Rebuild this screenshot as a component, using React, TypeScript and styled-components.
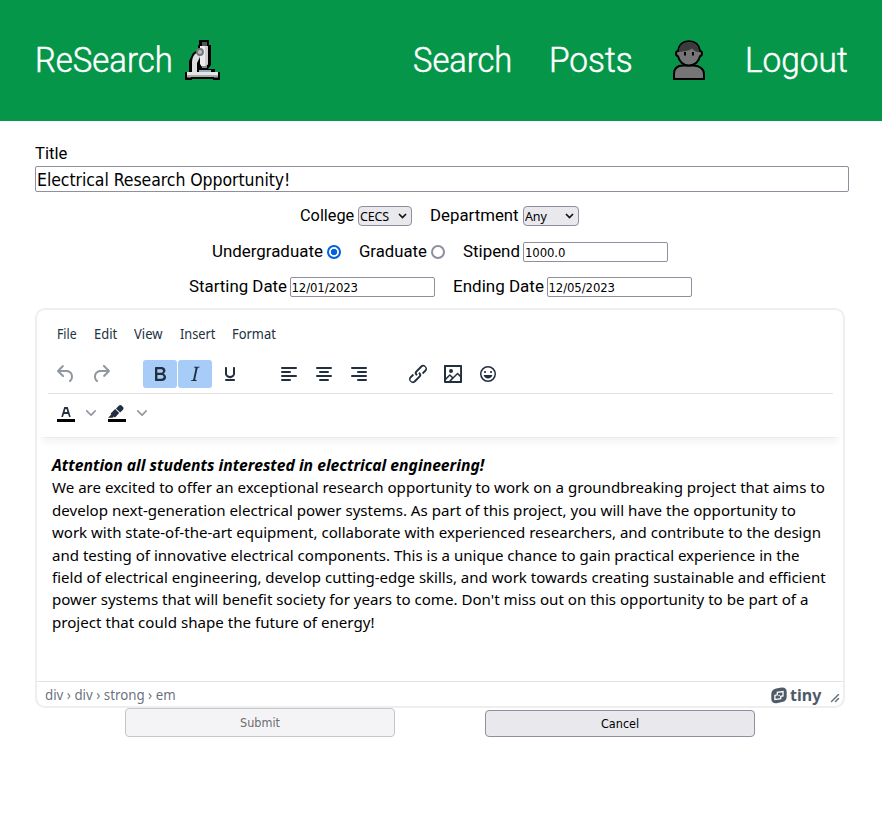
import React, { useLayoutEffect, useRef, useState } from "react";
import styled, { createGlobalStyle } from "styled-components";

const GlobalStyle = createGlobalStyle`
  *, *::before, *::after { box-sizing: border-box; }
  body { margin: 0; background: #fff; color: #000; }
`;

const display = `Roboto, "Noto Sans", sans-serif`;
const ui = `"Noto Sans", "Open Sans", sans-serif`;
const control = `"DejaVu Sans Condensed", "DejaVu Sans", sans-serif`;

const FitBox = styled.span<{ $w: number }>`
  display: inline-block;
  flex: none;
  width: ${(p) => p.$w}px;
  white-space: nowrap;
`;
const FitInner = styled.span`
  display: inline-block;
  transform-origin: 0 50%;
`;
function Fit({ w, children }: { w: number; children: React.ReactNode }) {
  const ref = useRef<HTMLSpanElement>(null);
  const [scale, setScale] = useState(1);
  useLayoutEffect(() => {
    if (ref.current) setScale(w / ref.current.offsetWidth);
  }, [w]);
  return (
    <FitBox $w={w}>
      <FitInner ref={ref} style={{ transform: `scaleX(${scale})` }}>{children}</FitInner>
    </FitBox>
  );
}

const Header = styled.header`
  height: 121px;
  padding: 0 34.5px 0 34.5px;
  background: #05964a;
  color: #fff;
  display: flex;
  align-items: center;
  justify-content: space-between;
  font: 300 35px/54px ${display};
  -webkit-text-stroke: 0.5px #fff;
`;
const Brand = styled.div`
  display: flex;
  align-items: center;
  gap: 11px;
  svg { margin-bottom: 2px; }
`;
const Nav = styled.nav`
  display: flex;
  align-items: center;
  gap: 37px;
  svg { margin: 0 2px 2px; }
`;

const Form = styled.form`
  padding: 19px 33px 0 35px;
  font: 400 17.2px/26px ${display};
`;
const Label = styled.label`
  display: flex;
  align-items: center;
`;
const TextInput = styled.input`
  display: block;
  width: 145px;
  height: 20px;
  margin: 1px 0 0 3px;
  padding: 2px 1px 0;
  border: 1px solid #8f8f9d;
  border-radius: 2px;
  background: #fff;
  color: #000;
  font: 13px/16px ${control};
  letter-spacing: -0.1px;
`;
const TitleInput = styled(TextInput)`
  width: 814px;
  height: 26px;
  margin: 0;
  font: 17.5px/22px ${control};
  letter-spacing: -0.06px;
`;
const Row = styled.div<{ $top: number }>`
  display: flex;
  justify-content: center;
  gap: 18px;
  height: 26px;
  margin: ${(p) => p.$top}px 4px 0 0;
`;
const SelectRow = styled(Row)`
  margin-right: 5px;
`;
const SelectWrap = styled.span<{ $w: number }>`
  display: flex;
  align-items: center;
  width: ${(p) => p.$w}px;
  height: 20px;
  margin: 2px 0 0 4px;
  padding-right: 4px;
  border: 1px solid #8f8f9d;
  border-radius: 4px;
  background: #e9e9ed;
`;
const Select = styled.select`
  appearance: none;
  flex: 1;
  min-width: 0;
  padding: 1px 0 0 1px;
  border: 0;
  background: none;
  color: #000;
  font: 12.5px/16px ${ui};
  letter-spacing: -0.15px;
`;
const Radio = styled.input`
  appearance: none;
  width: 14px;
  height: 14px;
  margin: 2px 0 0 4px;
  border: 2px solid #8f8f9d;
  border-radius: 50%;
  &:checked {
    border-color: #0060df;
    background: radial-gradient(circle, #0060df 2.8px, #fff 3.6px);
  }
`;

const Editor = styled.section`
  width: 810px;
  height: 400px;
  margin-top: 9px;
  border: 2px solid #eee;
  border-radius: 10px;
  overflow: hidden;
  display: flex;
  flex-direction: column;
  color: #222f3e;
  font-family: ${ui};
`;
const EditorHead = styled.div`
  flex: none;
  height: 127px;
  margin: 0 2px;
  padding: 0 9px;
  box-shadow: 0 2px 2px -2px rgba(34, 47, 62, 0.1), 0 8px 8px -4px rgba(34, 47, 62, 0.07);
`;
const MenuBar = styled.div`
  display: flex;
  align-items: center;
  gap: 17px;
  height: 45px;
  padding: 2px 0 0 9px;
  font-size: 13.5px;
  line-height: 20px;
`;
const ToolRow = styled.div<{ $line?: boolean }>`
  display: flex;
  align-items: center;
  gap: 25px;
  height: 39px;
  margin-right: -1px;
  padding-left: 1px;
  ${(p) => (p.$line ? "border-bottom: 1px solid #e3e3e3;" : "padding-bottom: 2px;")}
`;
const Group = styled.div`
  display: flex;
  gap: 1px;
`;
const Tool = styled.button<{ $on?: boolean; $dim?: boolean }>`
  display: flex;
  align-items: center;
  justify-content: center;
  width: 34px;
  height: 28px;
  padding: 0;
  border: 0;
  border-radius: 3px;
  background: ${(p) => (p.$on ? "#a6ccf7" : "none")};
  color: ${(p) => (p.$dim ? "rgba(34,47,62,.5)" : "#222f3e")};
`;
const SplitTool = styled.button`
  display: flex;
  align-items: center;
  gap: 8px;
  width: 50px;
  height: 28px;
  padding: 0 0 0 5px;
  border: 0;
  background: none;
  color: #222f3e;
  svg { flex: none; }
`;
const Content = styled.div`
  flex: 1;
  padding: 17px 15px 0 15px;
  color: #000;
  font-size: 15.3px;
  line-height: 22.4px;
`;
const Line = styled.div`
  height: 22.4px;
`;
const Lead = styled(Line)`
  font-weight: 700;
  font-style: italic;
`;
const StatusBar = styled.div`
  display: flex;
  align-items: center;
  height: 25px;
  padding: 2px 3px 0 8px;
  border-top: 1px solid #e3e3e3;
  color: rgba(34, 47, 62, 0.7);
  font-size: 13.5px;
  line-height: 20px;
`;
const Tiny = styled.span`
  display: flex;
  align-items: center;
  gap: 3px;
  margin-left: auto;
  color: #4e5a68;
  font: 700 16px/20px "Noto Sans", sans-serif;
`;
const Grip = styled.svg`
  margin: 6px 0 0 9px;
`;
const Actions = styled.div`
  display: flex;
  gap: 90px;
  padding-left: 90px;
`;
const Button = styled.button<{ $top?: number; $h: number }>`
  width: 270px;
  height: ${(p) => p.$h}px;
  margin-top: ${(p) => p.$top || 0}px;
  padding: 0;
  border: 1px solid #8f8f9d;
  border-radius: 4px;
  background: #e9e9ed;
  color: #000;
  font: 12.5px/18px ${control};
  &:disabled {
    border-color: #c5c5cc;
    background: #f4f4f6;
    color: #6d6d6d;
  }
`;

const icons = {
  undo: "M6.4 8H12c3.7 0 6.2 2 6.8 5.1.6 2.7-.4 5.6-2.3 6.8a1 1 0 0 1-1-1.8c1.1-.6 1.8-2.7 1.4-4.6-.5-2.1-2.1-3.5-4.9-3.5H6.4l3.3 3.3a1 1 0 1 1-1.4 1.4l-5-5a1 1 0 0 1 0-1.4l5-5a1 1 0 0 1 1.4 1.4L6.4 8Z",
  redo: "M17.6 10H12c-2.8 0-4.4 1.4-4.9 3.5-.4 2 .3 4 1.4 4.6a1 1 0 1 1-1 1.8c-2-1.2-2.9-4.1-2.3-6.8.6-3 3-5.1 6.8-5.1h5.6l-3.3-3.3a1 1 0 1 1 1.4-1.4l5 5a1 1 0 0 1 0 1.4l-5 5a1 1 0 0 1-1.4-1.4l3.3-3.3Z",
  bold: "M7.8 19c-.3 0-.5 0-.6-.2l-.2-.5V5.7c0-.2 0-.4.2-.5l.6-.2h5c1.5 0 2.7.3 3.5 1 .7.6 1.1 1.4 1.1 2.5a3 3 0 0 1-.6 1.9c-.4.6-1 1-1.6 1.2.4.1.9.3 1.3.6s.8.7 1 1.2c.4.4.5 1 .5 1.6 0 1.3-.4 2.3-1.3 3-.8.7-2.1 1-3.8 1H7.8Zm5-8.3c.6 0 1.2-.1 1.6-.5.4-.3.6-.7.6-1.3 0-1.1-.8-1.7-2.3-1.7H9.3v3.5h3.4Zm.5 6c.7 0 1.3-.1 1.7-.4.4-.4.6-.9.6-1.5s-.2-1-.7-1.4c-.4-.3-1-.4-2-.4H9.4v3.8h4Z",
  italic: "m16.7 4.7-.1.9h-.3c-.6 0-1 0-1.4.3-.3.3-.4.6-.5 1.1l-2.1 9.8v.6c0 .5.4.8 1.4.8h.2l-.2.8H8l.2-.8h.2c1.1 0 1.8-.5 2-1.5l2-9.8.1-.5c0-.6-.4-.8-1.4-.8h-.3l.2-.9h5.8Z",
  underline: "M16 5c.6 0 1 .4 1 1v5.5a4 4 0 0 1-.4 1.8l-1 1.4a5.3 5.3 0 0 1-5.5 1 5 5 0 0 1-1.6-1c-.5-.4-.8-.9-1.1-1.4a4 4 0 0 1-.4-1.8V6c0-.6.4-1 1-1s1 .4 1 1v5.5c0 .3 0 .6.2 1l.6.7a3.3 3.3 0 0 0 2.2.8 3.4 3.4 0 0 0 2.2-.8c.3-.2.4-.5.6-.8l.2-.9V6c0-.6.4-1 1-1ZM8 17h8c.6 0 1 .4 1 1s-.4 1-1 1H8a1 1 0 0 1 0-2Z",
  left: "M5 5h14a1 1 0 0 1 0 2H5a1 1 0 1 1 0-2Zm0 4h8a1 1 0 0 1 0 2H5a1 1 0 1 1 0-2Zm0 8h8a1 1 0 0 1 0 2H5a1 1 0 0 1 0-2Zm0-4h14a1 1 0 0 1 0 2H5a1 1 0 0 1 0-2Z",
  center: "M5 5h14a1 1 0 0 1 0 2H5a1 1 0 1 1 0-2Zm3 4h8a1 1 0 0 1 0 2H8a1 1 0 1 1 0-2Zm0 8h8a1 1 0 0 1 0 2H8a1 1 0 0 1 0-2Zm-3-4h14a1 1 0 0 1 0 2H5a1 1 0 0 1 0-2Z",
  right: "M5 5h14a1 1 0 0 1 0 2H5a1 1 0 1 1 0-2Zm6 4h8a1 1 0 0 1 0 2h-8a1 1 0 0 1 0-2Zm0 8h8a1 1 0 0 1 0 2h-8a1 1 0 0 1 0-2Zm-6-4h14a1 1 0 0 1 0 2H5a1 1 0 0 1 0-2Z",
  link: "M6.2 12.3a1 1 0 0 1 1.4 1.4l-2 2a2 2 0 1 0 2.6 2.8l4.8-4.8a1 1 0 0 0 0-1.4 1 1 0 1 1 1.4-1.3 2.9 2.9 0 0 1 0 4L9.6 20a3.9 3.9 0 0 1-5.5-5.5l2-2Zm11.6-.6a1 1 0 0 1-1.4-1.4l2-2a2 2 0 1 0-2.6-2.8L11 10.3a1 1 0 0 0 0 1.4A1 1 0 1 1 9.6 13a2.9 2.9 0 0 1 0-4L14.4 4a3.9 3.9 0 0 1 5.5 5.5l-2 2Z",
  image: "m5 15.7 3.3-3.2c.3-.3.7-.3 1 0L12 15l4.1-4c.3-.4.8-.4 1 0l2 1.9V5H5v10.7ZM5 18V19h3l2.8-2.9-2-2L5 17.9Zm14-3-2.5-2.4-6.4 6.5H19v-4ZM4 3h16c.6 0 1 .4 1 1v16c0 .6-.4 1-1 1H4a1 1 0 0 1-1-1V4c0-.6.4-1 1-1Zm6 8a2 2 0 1 0 0-4 2 2 0 0 0 0 4Z",
  emoji: "M9 11c.6 0 1-.4 1-1s-.4-1-1-1a1 1 0 0 0-1 1c0 .6.4 1 1 1Zm6 0c.6 0 1-.4 1-1s-.4-1-1-1a1 1 0 0 0-1 1c0 .6.4 1 1 1Zm-3 5.5c2.1 0 4-1.5 4.4-3.5H7.6c.5 2 2.3 3.5 4.4 3.5ZM12 4a8 8 0 1 0 0 16 8 8 0 0 0 0-16Zm0 14.5a6.5 6.5 0 1 1 0-13 6.5 6.5 0 0 1 0 13Z",
  textColor: "M8.7 16h-.8a.5.5 0 0 1-.5-.6l2.7-9c.1-.3.3-.4.5-.4h2.8c.2 0 .4.1.5.4l2.7 9a.5.5 0 0 1-.5.6h-.8a.5.5 0 0 1-.4-.4l-.7-2.2c0-.3-.3-.4-.5-.4h-3.4c-.2 0-.4.1-.5.4l-.7 2.2c0 .3-.2.4-.4.4Zm2.6-7.6-.6 2a.5.5 0 0 0 .5.6h1.6a.5.5 0 0 0 .5-.6l-.6-2c0-.3-.3-.4-.5-.4h-.4c-.2 0-.4.1-.5.4Z",
  highlight: "M7.7 16.7H3l3.3-3.3-.7-.8L10.2 8l4 4.1-4 4.2c-.2.2-.6.2-.8 0l-.6-.7-1.1 1.1zm5-7.5L11 7.4l3-2.9a2 2 0 0 1 2.6 0L18 6c.7.7.7 2 0 2.7l-2.9 2.9-1.8-1.8-.5-.6",
};

function Icon({ name, bar }: { name: keyof typeof icons; bar?: boolean }) {
  return (
    <svg width="24" height="24" viewBox="0 0 24 24" fill="currentColor">
      {bar && <path fill="#000" d="M3 18h18v3H3z" />}
      <path fillRule="evenodd" d={icons[name]} />
    </svg>
  );
}
const Chevron = () => (
  <svg width="10" height="10" viewBox="0 0 10 10" fill="currentColor" opacity=".5">
    <path d="M8.7 2.2c.3-.3.8-.3 1 0 .4.4.4.9 0 1.2L5.7 7.8c-.3.3-.9.3-1.2 0L.2 3.4a.8.8 0 0 1 0-1.2c.3-.3.8-.3 1.1 0L5 6l3.7-3.8Z" />
  </svg>
);
const Arrow = () => (
  <svg width="9" height="6" viewBox="0 0 9 6" fill="none" stroke="#111" strokeWidth="1.6">
    <path d="M1 1l3.5 3.6L8 1" />
  </svg>
);
const Microscope = () => (
  <svg width="37" height="42" viewBox="0 0 37 42">
    <path d="M15 1h10v5h2v20l-3 4h7v3h5v8h-7v-1H8v1H1v-8h4V22l4-8 5-3V6h1Z" fill="#000" />
    <path d="M18 3h5v4h-5z" fill="#555" />
    <path d="M16 7h8v18l-3 3h-3l-2-3z" fill="#ececec" />
    <path d="M21 7h3v18l-3 3z" fill="#cfcfcf" />
    <path d="M15 13c-5 1-7 6-7 11v9h5V24l3-6z" fill="#dedede" />
    <circle cx="16" cy="13" r="3" fill="#bbb" stroke="#777" strokeWidth="1.8" />
    <path d="M18 27h5v2h-5z" fill="#888" />
    <path d="M15 31h12v2H15z" fill="#9ab" />
    <path d="M3 33h31v3H3z" fill="#e6e6e6" />
    <path d="M3 36h31v2H3z" fill="#aaa" />
    <path d="M3 38h4v1H3zm27 0h4v1h-4z" fill="#555" />
  </svg>
);
const Person = () => (
  <svg width="34" height="42" viewBox="0 0 34 42" fill="#757575" stroke="#000" strokeWidth="2">
    <path d="M2 40V35c0-6 4-8.5 9-8.5h10c6 0 11 3 11 8.5v5Z" />
    <path d="M6 12C7 5 11 2.2 17 2.2S27 5 28 12c1.5 0 2 1 2 2.5s-1 2.500-2 2.8c-1 5-5 9.2-11 9.2S7 22 6 17.3c-1.500-.3-2-1.300-2-2.8S4.500 12 6 12Z" />
    <path stroke="none" fill="#3b3b3b" d="M7 13C7 6 11 3.2 17 3.2S27 6 27 13C24 12.8 21.5 11.5 20 9.5 17.5 12 11 12.5 7 13Z" />
    <path stroke="none" fill="#000" d="M12 13h2v3.5h-2zm8 0h2v3.5h-2z" />
  </svg>
);
const TinyMark = () => (
  <svg width="16" height="17" viewBox="0 0 16 17">
    <path fill="#4e5a68" d="M5.200 1.500 10.500.6Q15.700.2 15.700 5.200v4.300q0 4.900-4.700 5.600l-5.400 1.200Q.3 16.700.3 11.500V7.300Q.3 2.400 5.200 1.500Z" />
    <path fill="none" stroke="#fff" strokeWidth="1.3" d="M3.900 8.300 6.300 7.800V5.400L12 4.500V9L9.700 9.400v2.300L3.900 12.600Z" />
    <path fill="#fff" d="M7.400 8l1.300-.2v1.300l-1.300.2z" />
  </svg>
);

const body: [number, string][] = [
  [773, "We are excited to offer an exceptional research opportunity to work on a groundbreaking project that aims to"],
  [744, "develop next-generation electrical power systems. As part of this project, you will have the opportunity to"],
  [769, "work with state-of-the-art equipment, collaborate with experienced researchers, and contribute to the design"],
  [748, "and testing of innovative electrical components. This is a unique chance to gain practical experience in the"],
  [774, "field of electrical engineering, develop cutting-edge skills, and work towards creating sustainable and efficient"],
  [756, "power systems that will benefit society for years to come. Don't miss out on this opportunity to be part of a"],
  [322, "project that could shape the future of energy!"],
];
const menus: [number, string][] = [[20, "File"], [23, "Edit"], [29, "View"], [35, "Insert"], [44, "Format"]];

export default function App() {
  return (
    <>
      <GlobalStyle />
      <Header>
        <Brand>
          <Fit w={138}>ReSearch</Fit>
          <Microscope />
        </Brand>
        <Nav>
          <Fit w={99}>Search</Fit>
          <Fit w={84}>Posts</Fit>
          <Person />
          <Fit w={103}>Logout</Fit>
        </Nav>
      </Header>
      <Form onSubmit={(e) => e.preventDefault()}>
        <Label><Fit w={32}>Title</Fit></Label>
        <TitleInput defaultValue="Electrical Research Opportunity!" />
        <SelectRow $top={10}>
          <Label>
            <Fit w={54}>College</Fit>
            <SelectWrap $w={54}><Select><option>CECS</option></Select><Arrow /></SelectWrap>
          </Label>
          <Label>
            <Fit w={89}>Department</Fit>
            <SelectWrap $w={56}><Select><option>Any</option></Select><Arrow /></SelectWrap>
          </Label>
        </SelectRow>
        <Row $top={10}>
          <Label><Fit w={111}>Undergraduate</Fit><Radio type="radio" name="level" defaultChecked /></Label>
          <Label><Fit w={68}>Graduate</Fit><Radio type="radio" name="level" /></Label>
          <Label><Fit w={57}>Stipend</Fit><TextInput defaultValue="1000.0" /></Label>
        </Row>
        <Row $top={9}>
          <Label><Fit w={98}>Starting Date</Fit><TextInput defaultValue="12/01/2023" /></Label>
          <Label><Fit w={91}>Ending Date</Fit><TextInput defaultValue="12/05/2023" /></Label>
        </Row>
        <Editor>
          <EditorHead>
            <MenuBar>{menus.map(([w, t]) => <Fit key={t} w={w}>{t}</Fit>)}</MenuBar>
            <ToolRow $line>
              <Group>
                <Tool type="button" $dim><Icon name="undo" /></Tool>
                <Tool type="button" $dim><Icon name="redo" /></Tool>
              </Group>
              <Group>
                <Tool type="button" $on><Icon name="bold" /></Tool>
                <Tool type="button" $on><Icon name="italic" /></Tool>
                <Tool type="button"><Icon name="underline" /></Tool>
              </Group>
              <Group>
                <Tool type="button"><Icon name="left" /></Tool>
                <Tool type="button"><Icon name="center" /></Tool>
                <Tool type="button"><Icon name="right" /></Tool>
              </Group>
              <Group>
                <Tool type="button"><Icon name="link" /></Tool>
                <Tool type="button"><Icon name="image" /></Tool>
                <Tool type="button"><Icon name="emoji" /></Tool>
              </Group>
            </ToolRow>
            <ToolRow>
              <Group>
                <SplitTool type="button"><Icon name="textColor" bar /><Chevron /></SplitTool>
                <SplitTool type="button"><Icon name="highlight" bar /><Chevron /></SplitTool>
              </Group>
            </ToolRow>
          </EditorHead>
          <Content>
            <Lead><Fit w={432}>Attention all students interested in electrical engineering!</Fit></Lead>
            {body.map(([w, t]) => <Line key={t}><Fit w={w}>{t}</Fit></Line>)}
          </Content>
          <StatusBar>
            <Fit w={131}>div › div › strong › em</Fit>
            <Tiny><TinyMark /><Fit w={31}>tiny</Fit></Tiny>
            <Grip width="10" height="10" viewBox="0 0 10 10" fill="currentColor">
              <path d="M8.1 1.1A.5.5 0 1 1 9 2l-7 7A.5.5 0 1 1 1 8l7-7ZM8.1 5.1A.5.5 0 1 1 9 6l-3 3A.5.5 0 1 1 5 8l3-3Z" />
            </Grip>
          </StatusBar>
        </Editor>
        <Actions>
          <Button $h={29} disabled><Fit w={40}>Submit</Fit></Button>
          <Button type="button" $h={27} $top={2}><Fit w={38}>Cancel</Fit></Button>
        </Actions>
      </Form>
    </>
  );
}
